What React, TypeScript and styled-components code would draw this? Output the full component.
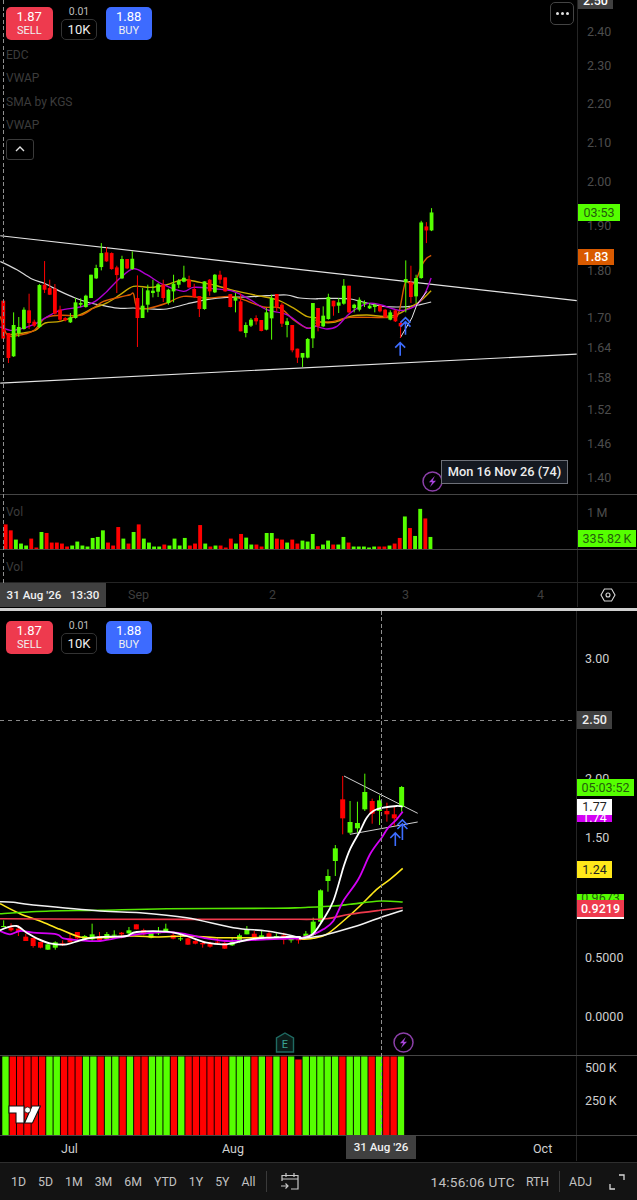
import React from "react";
import styled, { createGlobalStyle } from "styled-components";

const GlobalStyle = createGlobalStyle`
  html, body { margin: 0; padding: 0; background: #000; }
  body { font-family: "Roboto", "Liberation Sans", sans-serif; }
`;

const GREEN = "#55ff00";
const RED = "#ff0000";

type Candle = [string, number, number, number, number];
const g = "g";
const r = "r";

/* candle rows: colour, wick top, body top, body bottom, wick bottom (read at 3x) */
const topA: Candle[] = [
  [r,243,243,357,357],[r,340,340,415,430],[g,278,316,410,412],[g,292,322,340,352],[g,263,270,328,330],
  [r,222,272,310,328],[r,300,306,318,322],[g,193,196,322,325],[r,124,195,210,220],[r,180,205,225,226],
  [r,193,207,282,285],[r,258,270,300,305],[r,292,295,302,305],[g,280,293,308,310],[g,235,248,295,297],
  [g,236,250,255,262],[g,225,228,262,264],[g,165,165,235,235],[g,135,145,176,178],[g,70,100,142,152],
  [r,82,98,125,126],[r,98,100,148,150],[r,138,143,166,220],[g,108,118,176,178],[r,118,118,146,148],
  [g,95,117,148,150],[r,167,235,295,382],[g,205,258,295,295],[g,195,212,255,278],[g,180,213,220,233],
  [g,190,194,216,232],[r,180,195,235,247],[g,207,210,250,255],[g,165,192,215,248],[g,178,183,195,205],
  [g,138,174,186,188],[r,168,180,203,205],[r,192,208,232,235],[r,229,229,268,292],[g,185,185,268,270],
  [r,178,180,215,228],[g,163,165,218,220],[r,153,165,180,192],[r,173,173,215,216],[r,223,223,262,263],
  [g,220,233,243,278],[r,222,245,335,335],[g,308,316,340,353],[g,295,300,318,322],[r,287,295,305,315],
  [r,301,301,334,335],[g,265,278,330,332],[g,225,235,296,360],[r,223,223,262,275],[r,250,255,312,322],
  [g,295,305,316,353],[r,316,316,392,398],[r,387,387,414,430],[g,400,400,414,442],[g,355,358,414,416],
  [g,250,250,356,385],
];
const topB: Candle[] = [
  [r,355,355,410,425],[g,350,378,410,412],[g,312,322,388,390],[r,333,333,350,378],[g,325,338,348,370],
  [g,268,288,342,345],[r,288,288,368,370],[g,342,345,355,368],[g,323,330,360,365],[g,332,338,342,352],
  [g,340,348,356,358],[g,342,345,352,368],[r,346,348,365,368],[r,358,360,382,385],[g,362,368,390,392],
  [r,360,362,395,397],[r,396,400,410,445],[g,212,268,278,368],[r,228,278,322,340],[g,255,265,320,340],
  [g,93,98,265,267],[r,97,110,122,160],[g,55,68,122,124],
];
const botA: Candle[] = [
  [g,118,135,137,137],[r,127,140,148,152],[r,133,143,152,165],[r,158,167,180,180],[r,170,171,195,200],
  [r,182,183,200,202],[g,188,190,206,207],[g,181,184,200,206],[r,178,187,190,195],[r,160,172,184,185],
  [r,153,153,172,175],[g,162,165,175,177],[g,128,160,175,180],[r,153,165,178,180],[g,153,159,175,177],
  [g,148,161,163,168],[r,153,155,160,172],[g,138,148,157,160],[r,130,130,145,145],[r,143,147,160,163],
  [g,153,155,170,172],[g,138,152,157,162],[g,128,143,153,155],[r,155,162,173,175],[g,160,172,175,180],
  [r,170,172,191,192],[r,175,180,188,190],[r,180,186,190,200],[r,182,188,197,200],[r,172,182,185,192],
  [r,182,186,203,204],[g,170,182,193,195],[g,158,163,182,185],[g,135,146,160,160],[r,150,158,170,178],
  [g,148,163,173,175],[r,153,157,170,175],[g,157,165,170,172],[r,155,163,176,190],[g,165,174,178,185],
  [r,172,175,178,188],
];
const botB: Candle[] = [
  [g,540,548,562,562],[g,500,512,552,555],[g,415,418,512,515],[g,355,375,390,422],[g,282,292,330,375],
  [r,75,145,202,250],[g,150,213,245,250],[g,152,216,232,245],[g,68,123,175,180],[r,143,150,188,218],
  [g,133,148,180,222],[r,155,180,190,212],[r,165,190,202,225],[g,105,108,168,182],
];

const topVolumes: [string, number][] = [
  [r,76],[r,58],[g,30],[g,18],[g,12],[r,33],[r,6],[g,53],[r,50],[r,21],[r,21],[r,18],[r,9],[g,12],[g,24],[g,12],[g,9],
  [g,35],[g,38],[g,58],[r,21],[r,12],[r,68],[g,33],[r,18],[g,53],[r,76],[g,33],[g,21],[g,9],[g,9],[r,15],[g,12],[g,33],
  [g,12],[g,35],[r,12],[r,18],[r,74],[g,18],[r,9],[g,12],[r,12],[r,6],[r,33],[g,18],[r,47],[g,36],[g,15],[r,15],[r,9],
  [g,50],[g,50],[r,33],[r,30],[g,21],[r,30],[r,18],[g,27],[g,24],[g,47],
  [r,10],[g,15],[g,27],[r,15],[g,15],[g,38],[r,21],[g,9],[g,9],[g,9],[g,6],[g,9],[r,9],[r,9],[g,12],[r,18],[r,35],
  [g,100],[r,65],[g,41],[g,123],[r,94],[g,38],
];

const botVolumes = "GRRRRRGGRRRGGRGGRGRRGGGRGRRRRRRGGGRGRGRGSGGGGGRGGGRGRRG".split("");

const TOP_STEP = 5.165;
const TOP_OX = 3;

type Pt = [number, number];
const scalePts = (pts: Pt[], ox: number, oy: number): Pt[] => pts.map(([x, y]) => [ox + x / 3, oy + y / 3]);
const pathOf = (pts: Pt[]) => pts.map(([x, y], i) => `${i ? "L" : "M"}${x.toFixed(1)} ${y.toFixed(1)}`).join(" ");
const smooth = (pts: Pt[]) => {
  let d = `M${pts[0][0].toFixed(1)} ${pts[0][1].toFixed(1)}`;
  for (let i = 0; i < pts.length - 1; i++) {
    const p0 = pts[i - 1] || pts[i];
    const p1 = pts[i];
    const p2 = pts[i + 1];
    const p3 = pts[i + 2] || p2;
    const c1x = p1[0] + (p2[0] - p0[0]) / 6;
    const c1y = p1[1] + (p2[1] - p0[1]) / 6;
    const c2x = p2[0] - (p3[0] - p1[0]) / 6;
    const c2y = p2[1] - (p3[1] - p1[1]) / 6;
    d += ` C${c1x.toFixed(1)} ${c1y.toFixed(1)} ${c2x.toFixed(1)} ${c2y.toFixed(1)} ${p2[0].toFixed(1)} ${p2[1].toFixed(1)}`;
  }
  return d;
};

const topLines: { color: string; w: number; a: Pt[]; b: Pt[] }[] = [
  { color: "#d8d8d8", w: 1.2, a: [[0,125],[50,150],[95,178],[135,192],[180,215],[225,235],[270,250],[310,258],[360,266],[400,265],[450,268],[500,268],[560,253],[620,240],[680,233],[740,232],[800,228],[860,226],[900,235],[950,238]],
    b: [[0,327],[50,326],[100,328],[150,340],[200,350],[240,352],[280,350],[310,345],[343,337]] },
  { color: "#c9a800", w: 1.4, a: [[30,345],[70,340],[105,332],[135,310],[180,305],[240,285],[280,265],[320,250],[360,225],[400,200],[450,203],[500,195],[550,180],[600,188],[650,198],[700,212],[760,225],[830,240],[880,265],[920,290],[950,295]],
    b: [[0,395],[50,398],[100,380],[150,376],[200,380],[240,375],[280,352],[310,335],[343,303]] },
  { color: "#d95a00", w: 1.4, a: [[0,290],[20,345],[50,348],[100,333],[135,295],[180,287],[240,287],[280,265],[310,245],[360,232],[390,225],[400,222],[412,265],[450,265],[500,250],[550,230],[620,235],[690,230],[730,240],[790,262],[840,265],[880,300],[920,325],[950,318]],
    b: [[0,398],[50,395],[100,383],[220,383],[245,370],[265,280],[285,285],[300,265],[316,225],[330,205],[343,197]] },
  { color: "#b000d0", w: 1.4, a: [[0,322],[30,332],[60,328],[100,315],[135,295],[180,272],[240,262],[285,245],[320,215],[360,175],[400,147],[440,165],[490,195],[550,215],[580,203],[640,207],[700,215],[750,240],[800,270],[860,285],[920,325],[950,318]],
    b: [[0,410],[30,418],[60,410],[100,370],[150,342],[190,345],[230,358],[260,362],[300,345],[325,310],[343,265]] },
];

const botLines: { color: string; w: number; a: Pt[]; b: Pt[] }[] = [
  { color: "#ffe81a", w: 1.6, a: [[0,68],[60,98],[120,120],[180,145],[240,168],[300,170],[400,165],[470,168],[560,165],[650,170],[740,170],[800,170],[899,172]],
    b: [[0,565],[40,562],[80,550],[130,510],[180,465],[230,415],[270,385],[308,352]] },
  { color: "#55e600", w: 1.6, a: [[0,98],[150,90],[300,88],[500,83],[800,82],[899,80]], b: [[0,470],[100,465],[150,460],[240,450],[308,453]] },
  { color: "#ef3a4c", w: 1.6, a: [[0,113],[300,115],[899,115]], b: [[0,505],[80,503],[150,490],[240,478],[308,470]] },
  { color: "#f2f2f2", w: 1.6, a: [[0,62],[40,64],[100,72],[300,90],[420,95],[560,110],[700,140],[800,150],[880,165]], b: [[0,562],[60,555],[100,545],[170,525],[240,500],[308,478]] },
  { color: "#d400f5", w: 1.8, a: [[0,150],[30,160],[60,150],[100,155],[170,160],[190,172],[240,178],[300,180],[380,165],[430,158],[500,153],[560,160],[620,172],[680,180],[740,178],[800,175],[899,172]],
    b: [[0,562],[40,550],[70,535],[100,510],[130,450],[175,385],[210,310],[245,260],[265,230],[290,205],[308,182]] },
  { color: "#ffffff", w: 1.8, a: [[0,148],[20,140],[50,135],[80,155],[110,172],[150,187],[200,190],[240,178],[280,170],[330,167],[380,165],[410,153],[500,152],[560,165],[620,185],[680,190],[740,177],[800,170],[860,168],[899,168]],
    b: [[0,562],[20,558],[40,548],[70,505],[100,450],[130,350],[150,295],[180,240],[200,200],[220,180],[250,170],[290,165],[308,167]] },
];

const Page = styled.div`
  width: 637px;
  height: 1200px;
  background: #000;
  overflow: hidden;
  display: flex;
  flex-direction: column;
`;

const ChartPanel = styled.section<{ $height: number }>`
  position: relative;
  height: ${(p) => p.$height}px;
  display: flex;
  flex-direction: column;
  flex: none;
`;

const Divider = styled.div`
  height: 3px;
  flex: none;
  background: #cfcfcf;
`;

const Pane = styled.div<{ $height: number; $axis: number; $line?: string }>`
  height: ${(p) => p.$height}px;
  flex: none;
  box-sizing: border-box;
  display: grid;
  grid-template-columns: ${(p) => p.$axis}px 1fr;
  border-bottom: 1px solid ${(p) => p.$line || "transparent"};
`;

const Plot = styled.div`
  position: relative;
  overflow: hidden;
  display: flex;
  flex-direction: column;
  align-items: flex-start;
`;

const ChartSvg = styled.svg`
  position: absolute;
  inset: 0;
  width: 100%;
  height: 100%;
`;

const Scale = styled.div`
  position: relative;
  overflow: hidden;
  border-left: 1px solid #252525;
`;

const Tick = styled.span<{ $top: number; $bright?: boolean }>`
  position: absolute;
  left: ${(p) => (p.$bright ? 8 : 9)}px;
  top: ${(p) => p.$top}px;
  transform: translateY(-50%);
  font-size: 12.5px;
  line-height: 14px;
  white-space: nowrap;
  color: ${(p) => (p.$bright ? "#cfcfcf" : "#4c4c4c")};
`;

const Chip = styled.span<{ $top: number; $h: number; $w: number; $bg: string; $fg: string; $bold?: boolean }>`
  position: absolute;
  left: 0;
  top: ${(p) => p.$top}px;
  width: ${(p) => p.$w}px;
  height: ${(p) => p.$h}px;
  background: ${(p) => p.$bg};
  color: ${(p) => p.$fg};
  font-size: 12.5px;
  font-weight: ${(p) => (p.$bold ? 500 : 400)};
  line-height: ${(p) => p.$h}px;
  text-align: center;
  white-space: nowrap;
  overflow: hidden;
`;

const TradeBar = styled.div<{ $top: number }>`
  display: flex;
  align-items: flex-end;
  gap: 8.5px;
  margin: ${(p) => p.$top}px 0 0 6px;
  position: relative;
`;

const TradeButton = styled.div<{ $bg: string }>`
  width: 46.5px;
  height: 33px;
  box-sizing: border-box;
  border-radius: 5px;
  background: ${(p) => p.$bg};
  color: #fff;
  text-align: center;
  font-size: 13px;
  line-height: 14px;
  padding-top: 3px;
`;

const TradeLabel = styled.div`
  font-size: 11px;
  line-height: 13px;
  color: #f0f0f0;
`;

const SizeBox = styled.div`
  width: 36px;
  text-align: center;
`;

const SizeStep = styled.div`
  color: #bdbdbd;
  font-size: 10.5px;
  line-height: 12px;
  margin-bottom: 1px;
`;

const SizeValue = styled.div`
  height: 21px;
  box-sizing: border-box;
  border: 1px solid #333;
  border-radius: 5px;
  color: #eee;
  font-size: 13px;
  line-height: 19px;
`;

const Legend = styled.div`
  margin: 4px 0 0 6px;
  position: relative;
`;

const LegendRow = styled.div`
  color: #3c3c3c;
  font-size: 12px;
  line-height: 23.4px;
`;

const Collapse = styled.div`
  width: 28px;
  height: 21px;
  margin-top: 1px;
  box-sizing: border-box;
  border: 1px solid #3a3a3a;
  border-radius: 3px;
  display: flex;
  align-items: center;
  justify-content: center;
`;

const PaneLabel = styled.div`
  position: relative;
  margin: 9px 0 0 6px;
  color: #3c3c3c;
  font-size: 12px;
  line-height: 16px;
`;

const MoreButton = styled.div`
  position: absolute;
  right: 3px;
  top: 2px;
  width: 24px;
  height: 23px;
  box-sizing: border-box;
  border: 1px solid #444;
  border-radius: 5px;
  display: flex;
  align-items: center;
  justify-content: center;
  gap: 2px;
`;

const Dot = styled.i`
  width: 3px;
  height: 3px;
  background: #e0e0e0;
  border-radius: 50%;
`;

const DateTip = styled.div`
  position: absolute;
  left: 441px;
  top: 460px;
  height: 24px;
  width: 127px;
  box-sizing: border-box;
  background: #141820;
  border: 1px solid #6d7078;
  color: #ececec;
  font-size: 12.8px;
  font-weight: 500;
  line-height: 22px;
  text-align: center;
  white-space: nowrap;
`;

const Flash = styled.svg<{ $x: number; $y: number }>`
  position: absolute;
  left: ${(p) => p.$x}px;
  top: ${(p) => p.$y}px;
  width: 21px;
  height: 21px;
`;

const Crosshair = styled.div<{ $x: number; $height: number }>`
  position: absolute;
  top: 0;
  left: ${(p) => p.$x}px;
  width: 1px;
  height: ${(p) => p.$height}px;
  background: repeating-linear-gradient(to bottom, #8f8f8f 0 4px, transparent 4px 6.5px);
  pointer-events: none;
`;

const PriceLine = styled.div<{ $top: number; $width: number }>`
  position: absolute;
  left: 0;
  top: ${(p) => p.$top}px;
  height: 1px;
  width: ${(p) => p.$width}px;
  background: repeating-linear-gradient(to right, #8a8a8a 0 4px, transparent 4px 8px);
`;

const TimeAxis = styled.div<{ $bright?: boolean }>`
  position: relative;
  overflow: hidden;
  font-size: 12.5px;
  color: ${(p) => (p.$bright ? "#cfcfcf" : "#3e3e3e")};
`;

const TimeMark = styled.span<{ $x: number; $y: number }>`
  position: absolute;
  left: ${(p) => p.$x}px;
  top: ${(p) => p.$y}px;
  line-height: 16px;
  white-space: nowrap;
`;

const TimeFlag = styled.span<{ $x: number; $w: number; $h: number }>`
  position: absolute;
  left: ${(p) => p.$x}px;
  top: 0;
  width: ${(p) => p.$w}px;
  height: ${(p) => p.$h}px;
  background: #404040;
  color: #f0f0f0;
  font-size: 11.6px;
  font-weight: 500;
  line-height: ${(p) => p.$h}px;
  white-space: pre;
  text-align: center;
`;

const ScaleButton = styled.div`
  height: 100%;
  display: flex;
  align-items: center;
  justify-content: center;
`;

const Footer = styled.footer`
  flex: 1;
  box-sizing: border-box;
  border-top: 1px solid #2e2e2e;
  background: #131313;
  display: flex;
  align-items: center;
  padding: 0 12px 0 11px;
  font-size: 12.3px;
  color: #c2c2c2;
`;

const Ranges = styled.div`
  display: flex;
  gap: 12px;
`;

const Sep = styled.i<{ $m: number }>`
  width: 1px;
  height: 21px;
  background: #3a3a3a;
  margin: 0 ${(p) => p.$m}px;
`;

const ReplayIcon = styled.svg`
  width: 20px;
  height: 20px;
  margin-left: 2px;
  fill: none;
  stroke: #c8c8c8;
  stroke-width: 1.2;
`;

const FooterRight = styled.div`
  margin-left: auto;
  display: flex;
  align-items: center;
`;

const Clock = styled.span`
  font-size: 13.6px;
  letter-spacing: 0.25px;
`;

const SessionLabel = styled.span`
  margin-left: 11px;
`;

const ExpandIcon = styled.svg`
  width: 16px;
  height: 16px;
  margin-left: 17px;
  fill: none;
  stroke: #d8d8d8;
  stroke-width: 1.3;
`;

const LogoBox = styled.svg`
  position: absolute;
  left: 7.5px;
  top: 49.5px;
  width: 33px;
  height: 19px;
`;

const EventBadge = styled.svg`
  position: absolute;
  left: 275px;
  top: 421.5px;
  width: 20px;
  height: 21px;
`;

function Candles({ data, ox, step, oy, width }: { data: Candle[]; ox: number; step: number; oy: number; width: number }) {
  return (
    <>
      {data.map(([c, wt, bt, bb, wb], i) => {
        const x = ox + i * step;
        const col = c === "g" ? GREEN : RED;
        return (
          <g key={i} fill={col}>
            <rect x={x - 0.5} y={oy + wt / 3} width={1} height={Math.max((wb - wt) / 3, 1)} />
            <rect x={x - width / 2} y={oy + bt / 3} width={width} height={Math.max((bb - bt) / 3, 1)} />
          </g>
        );
      })}
    </>
  );
}

function UpArrow({ x, y, h, double, w = 1.6 }: { x: number; y: number; h: number; double?: boolean; w?: number }) {
  return (
    <g fill="none" stroke="#3d6dff" strokeWidth={w}>
      <path d={`M${x} ${y + h}V${y}M${x - 5} ${y + 5}L${x} ${y}L${x + 5} ${y + 5}`} />
      {double && <path d={`M${x - 5} ${y + 1}L${x} ${y - 4}L${x + 5} ${y + 1}`} />}
    </g>
  );
}

function FlashIcon({ x, y }: { x: number; y: number }) {
  return (
    <Flash $x={x} $y={y} viewBox="0 0 21 21">
      <circle cx="10.5" cy="10.5" r="9.5" fill="#000" stroke="#8b3fa8" strokeWidth="1.5" />
      <path d="M12.8 5L6.9 11.3h3.3l-2.2 4.8 6-6.4h-3.3z" fill="#a844dc" />
    </Flash>
  );
}

function Trade({ top }: { top: number }) {
  return (
    <TradeBar $top={top}>
      <TradeButton $bg="#ee3a4e">
        <div>1.87</div>
        <TradeLabel>SELL</TradeLabel>
      </TradeButton>
      <SizeBox>
        <SizeStep>0.01</SizeStep>
        <SizeValue>10K</SizeValue>
      </SizeBox>
      <TradeButton $bg="#3d6bff">
        <div>1.88</div>
        <TradeLabel>BUY</TradeLabel>
      </TradeButton>
    </TradeBar>
  );
}

export default function App() {
  return (
    <Page>
      <GlobalStyle />
      <ChartPanel $height={607.5}>
        <Pane $height={494.5} $axis={577} $line="#454545">
          <Plot>
            <ChartSvg viewBox="0 0 577 494">
              <path d="M0 236L577 301" stroke="#e4e4e4" strokeWidth="1.2" />
              <path d="M0 383.5L577 354.5" stroke="#e4e4e4" strokeWidth="1.2" />
              {topLines.map((l) => (
                <path
                  key={l.color}
                  d={smooth([...scalePts(l.a, 0, 220), ...scalePts(l.b, 317, 190)])}
                  fill="none"
                  stroke={l.color}
                  strokeWidth={l.w}
                />
              ))}
              <path d={pathOf(scalePts([[250,445],[285,385],[300,345],[330,305]], 317, 190))} fill="none" stroke="#eee" strokeWidth="1" />
              <Candles data={topA} ox={TOP_OX} step={TOP_STEP} oy={220} width={3.8} />
              <Candles data={topB} ox={TOP_OX + 61 * TOP_STEP} step={TOP_STEP} oy={190} width={3.8} />
              <UpArrow x={400.3} y={343} h={13} />
              <UpArrow x={405.6} y={322} h={13} double />
            </ChartSvg>
            <Trade top={6} />
            <Legend>
              <LegendRow>EDC</LegendRow>
              <LegendRow>VWAP</LegendRow>
              <LegendRow>SMA by KGS</LegendRow>
              <LegendRow>VWAP</LegendRow>
              <Collapse>
                <svg width="10" height="6" viewBox="0 0 10 6" fill="none" stroke="#e0e0e0" strokeWidth="1.4">
                  <path d="M1 5l4-4 4 4" />
                </svg>
              </Collapse>
            </Legend>
            <MoreButton>
              <Dot />
              <Dot />
              <Dot />
            </MoreButton>
            <FlashIcon x={421.5} y={471} />
            <DateTip>Mon 16 Nov 26 (74)</DateTip>
          </Plot>
          <Scale>
            {[["2.40",32],["2.30",66],["2.20",104],["2.10",143],["2.00",182],["1.90",226],["1.80",271],["1.70",318],["1.64",348],["1.58",378],["1.52",410],["1.46",444],["1.40",478]].map(([t, y]) => (
              <Tick key={t as string} $top={y as number}>{t}</Tick>
            ))}
            <Chip $top={-8} $h={17} $w={35} $bg="#404040" $fg="#fff" $bold>2.50</Chip>
            <Chip $top={204} $h={17} $w={42} $bg={GREEN} $fg="#245c0c">03:53</Chip>
            <Chip $top={248.5} $h={16.5} $w={36} $bg="#d95a00" $fg="#fff" $bold>1.83</Chip>
          </Scale>
        </Pane>
        <Pane $height={55.5} $axis={577} $line="#454545">
          <Plot>
            <ChartSvg viewBox="0 0 577 55">
              {topVolumes.map(([c, h], i) => (
                <rect key={i} x={TOP_OX - 1.9 + i * TOP_STEP} y={55 - h / 3} width={3.9} height={h / 3} fill={c === "g" ? GREEN : RED} />
              ))}
            </ChartSvg>
            <PaneLabel>Vol</PaneLabel>
          </Plot>
          <Scale>
            <Tick $top={18}>{"1\u2009M"}</Tick>
            <Chip $top={35} $h={17} $w={58} $bg={GREEN} $fg="#245c0c">{"335.82\u2009K"}</Chip>
          </Scale>
        </Pane>
        <Pane $height={33} $axis={577} $line="#242424">
          <Plot>
            <PaneLabel>Vol</PaneLabel>
          </Plot>
          <Scale />
        </Pane>
        <Pane $height={24.5} $axis={577}>
          <TimeAxis>
            <TimeFlag $x={0} $w={106} $h={24}>{"31 Aug '26   13:30"}</TimeFlag>
            <TimeMark $x={128} $y={4}>Sep</TimeMark>
            <TimeMark $x={269} $y={4}>2</TimeMark>
            <TimeMark $x={402} $y={4}>3</TimeMark>
            <TimeMark $x={537} $y={4}>4</TimeMark>
          </TimeAxis>
          <Scale>
            <ScaleButton>
              <svg width="16" height="14" viewBox="0 0 16 14" fill="none" stroke="#d8d8d8" strokeWidth="1.1">
                <path d="M4.4 1h7.2L15 7l-3.4 6H4.4L1 7z" />
                <circle cx="8" cy="7" r="2" />
              </svg>
            </ScaleButton>
          </Scale>
        </Pane>
        <Crosshair $x={3} $height={583} />
      </ChartPanel>
      <Divider />
      <ChartPanel $height={551.5}>
        <Pane $height={445} $axis={576} $line="#454545">
          <Plot>
            <ChartSvg viewBox="0 0 576 444">
              <path d="M344 775L417.7 812.3" transform="translate(0 -610)" stroke="#d0d0d0" strokeWidth="1" />
              <path d="M350 833.3L417.7 821" transform="translate(0 -610)" stroke="#d0d0d0" strokeWidth="1" />
              <Candles data={botA} ox={3.67} step={7.37} oy={270} width={5} />
              <Candles data={botB} ox={3.67 + 41 * 7.37} step={7.37} oy={140} width={5} />
              {botLines.map((l) => (
                <path
                  key={l.color}
                  d={smooth([...scalePts(l.a, 0, 270), ...scalePts(l.b, 300, 140)])}
                  fill="none"
                  stroke={l.color}
                  strokeWidth={l.w}
                />
              ))}
              <UpArrow x={395.3} y={222} h={13} w={1.6} />
              <UpArrow x={402.4} y={213} h={16} double w={1.6} />
            </ChartSvg>
            <PriceLine $top={109} $width={576} />
            <Trade top={9} />
            <EventBadge viewBox="0 0 20 21">
              <path d="M10 1L18.5 6v14h-17V6z" fill="#0b1a18" stroke="#1f6a62" strokeWidth="1.4" />
              <text x="10" y="16" textAnchor="middle" fontSize="11" fill="#3aa394" fontFamily="Roboto, sans-serif">E</text>
            </EventBadge>
            <FlashIcon x={392.5} y={421.5} />
          </Plot>
          <Scale>
            <Tick $top={48} $bright>3.00</Tick>
            <Tick $top={168} $bright>2.00</Tick>
            <Tick $top={227} $bright>1.50</Tick>
            <Tick $top={347} $bright>0.5000</Tick>
            <Tick $top={406} $bright>0.0000</Tick>
            <Chip $top={100} $h={18} $w={35} $bg="#404040" $fg="#f0f0f0" $bold>2.50</Chip>
            <Chip $top={168} $h={17} $w={57} $bg={GREEN} $fg="#245c0c">05:03:52</Chip>
            <Chip $top={203} $h={8} $w={35} $bg="#d400f5" $fg="#fff">1.74</Chip>
            <Chip $top={188} $h={16} $w={35} $bg="#fff" $fg="#222">1.77</Chip>
            <Chip $top={250} $h={17} $w={35} $bg="#ffe81a" $fg="#222">1.24</Chip>
            <Chip $top={283} $h={8} $w={47} $bg={GREEN} $fg="#245c0c">0.9673</Chip>
            <Chip $top={291} $h={17} $w={47} $bg="#fff" $fg="#fff" />
            <Chip $top={289} $h={17} $w={47} $bg="#ee3a4e" $fg="#fff" $bold>0.9219</Chip>
          </Scale>
        </Pane>
        <Pane $height={80.5} $axis={576} $line="#454545">
          <Plot>
            <ChartSvg viewBox="0 0 576 80">
              {botVolumes.map((c, i) => (
                <rect
                  key={i}
                  x={0.5 + i * 7.37}
                  y={c === "S" ? 3.5 : 0.5}
                  width={6.4}
                  height={c === "S" ? 76 : 79}
                  fill={c === "G" ? GREEN : RED}
                />
              ))}
            </ChartSvg>
            <LogoBox viewBox="0 0 33 19">
              <path d="M1 1h15v17H8V8H1zM24 1h8.5L24.5 18H16.5z" fill="#fff" stroke="#111" strokeWidth="1.1" />
              <circle cx="19.5" cy="5" r="3" fill="#fff" stroke="#111" strokeWidth="0.8" />
            </LogoBox>
          </Plot>
          <Scale>
            <Tick $top={12} $bright>{"500\u2009K"}</Tick>
            <Tick $top={45.5} $bright>{"250\u2009K"}</Tick>
          </Scale>
        </Pane>
        <Pane $height={26} $axis={576}>
          <TimeAxis $bright>
            <TimeMark $x={61} $y={5}>Jul</TimeMark>
            <TimeMark $x={222} $y={5}>Aug</TimeMark>
            <TimeFlag $x={346} $w={70} $h={23}>{"31 Aug '26"}</TimeFlag>
            <TimeMark $x={533} $y={5}>Oct</TimeMark>
          </TimeAxis>
          <Scale />
        </Pane>
        <Crosshair $x={381} $height={525} />
      </ChartPanel>
      <Footer>
        <Ranges>
          {["1D", "5D", "1M", "3M", "6M", "YTD", "1Y", "5Y", "All"].map((t) => (
            <span key={t}>{t}</span>
          ))}
        </Ranges>
        <Sep $m={11} />
        <ReplayIcon viewBox="0 0 20 20">
          <path d="M2 9V3.5h16V17h-7M2 7h16M6 1v4M14 1v4M1 14h7M5.5 11.5L8 14l-2.5 2.5" />
        </ReplayIcon>
        <FooterRight>
          <Clock>14:56:06 UTC</Clock>
          <SessionLabel>RTH</SessionLabel>
          <Sep $m={9.5} />
          <span>ADJ</span>
          <ExpandIcon viewBox="0 0 16 16">
            <path d="M10 1h5v5M6 15H1v-5" />
          </ExpandIcon>
        </FooterRight>
      </Footer>
    </Page>
  );
}
